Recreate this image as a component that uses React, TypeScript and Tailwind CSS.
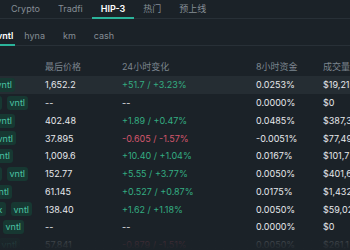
import clsx from "clsx";

const topTabs = ["Crypto", "Tradfi", "HIP-3", "热门", "预上线"];
const subTabs = ["hyna", "km", "cash"];

type Row = {
  tags: string[];
  edge: number;
  price: string;
  change: string;
  up?: boolean;
  funding: string;
  vol: string;
};

const rows: Row[] = [
  { tags: ["vntl"], edge: 15, price: "1,652.2", change: "+51.7 / +3.23%", up: true, funding: "0.0253%", vol: "$19,215" },
  { tags: ["xyz", "vntl"], edge: 28, price: "--", change: "--", funding: "0.0000%", vol: "$0" },
  { tags: ["vntl"], edge: 15, price: "402.48", change: "+1.89 / +0.47%", up: true, funding: "0.0485%", vol: "$387,31" },
  { tags: ["vntl"], edge: 16, price: "37.895", change: "-0.605 / -1.57%", up: false, funding: "-0.0051%", vol: "$77,49" },
  { tags: ["vntl"], edge: 13, price: "1,009.6", change: "+10.40 / +1.04%", up: true, funding: "0.0167%", vol: "$101,7" },
  { tags: ["xyz", "vntl"], edge: 28, price: "152.77", change: "+5.55 / +3.77%", up: true, funding: "0.0050%", vol: "$401,6" },
  { tags: ["vntl"], edge: 12, price: "61.145", change: "+0.527 / +0.87%", up: true, funding: "0.0175%", vol: "$1,432" },
  { tags: ["spx", "vntl"], edge: 32, price: "138.40", change: "+1.62 / +1.18%", up: true, funding: "0.0050%", vol: "$59,02" },
  { tags: ["vntl"], edge: 24, price: "--", change: "--", funding: "0.0000%", vol: "$0" },
  { tags: ["vntl"], edge: 20, price: "57.841", change: "-0.879 / -1.51%", up: false, funding: "0.0050%", vol: "$261,1" },
];

const App = () => {
  return (
    <div
      className="relative w-[350px] h-[250px] overflow-hidden bg-[#1b2228] text-[9px] text-[#e6e8eb]"
      style={{ fontFamily: "Inter, 'Noto Sans CJK SC', sans-serif" }}
    >
      {/* main tabs */}
      <div className="flex h-[19px] pl-[2px] border-b border-[#283037]">
        {topTabs.map((t) => (
          <div
            key={t}
            className={clsx(
              "flex items-center px-[9px] border-b-2 -mb-px leading-none",
              t === "HIP-3"
                ? "border-[#2bb39a] text-white font-semibold"
                : "border-transparent text-[#858d95]"
            )}
          >
            {t}
          </div>
        ))}
      </div>

      {/* sub tabs */}
      <div className="flex h-[27px] pt-[8px] ml-[-5px] border-b border-[#283037]">
        <div className="flex items-center px-[2px] border-b-2 -mb-px border-[#2bb39a] text-white font-semibold">
          vntl
        </div>
        {subTabs.map((t) => (
          <div
            key={t}
            className="flex items-center px-[9px] border-b-2 -mb-px border-transparent text-[#858d95]"
          >
            {t}
          </div>
        ))}
      </div>

      {/* header */}
      <div className="flex items-end h-[30px] pb-[3px] leading-[12px] text-[#7c858e]">
        <div className="w-[45px] shrink-0" />
        <div className="w-[77px] shrink-0">最后价格</div>
        <div className="w-[134px] shrink-0">24小时变化</div>
        <div className="w-[67px] shrink-0">8小时资金</div>
        <div className="whitespace-nowrap">成交量</div>
      </div>

      {/* rows */}
      <div className="flex flex-col">
        {rows.map((r, i) => (
          <div
            key={i}
            className={clsx(
              "flex items-center shrink-0 whitespace-nowrap",
              i === 0 ? "h-[18px] bg-[#252d33]" : "h-[17.75px]"
            )}
          >
            <div className="w-[45px] shrink-0 h-full overflow-hidden flex items-center">
              <div
                className="flex justify-end items-center gap-[5px] shrink-0"
                style={{ width: r.edge }}
              >
                {r.tags.map((tag) => (
                  <span
                    key={tag}
                    className="shrink-0 h-[14px] px-[3px] flex items-center rounded-[3px] bg-[#173832] text-[#4cc3a5]"
                  >
                    {tag}
                  </span>
                ))}
              </div>
            </div>
            <div className="w-[77px] shrink-0">{r.price}</div>
            <div
              className={clsx(
                "w-[134px] shrink-0",
                r.up === undefined
                  ? "text-[#e6e8eb]"
                  : r.up
                    ? "text-[#34ad82]"
                    : "text-[#d4566c]"
              )}
            >
              {r.change}
            </div>
            <div className="w-[67px] shrink-0">{r.funding}</div>
            <div>{r.vol}</div>
          </div>
        ))}
      </div>

      {/* bottom fade */}
      <div className="absolute left-0 right-0 bottom-0 h-[16px] bg-linear-to-b from-[#1b2228b0] to-[#1b2228]" />
    </div>
  );
};

export default App;
